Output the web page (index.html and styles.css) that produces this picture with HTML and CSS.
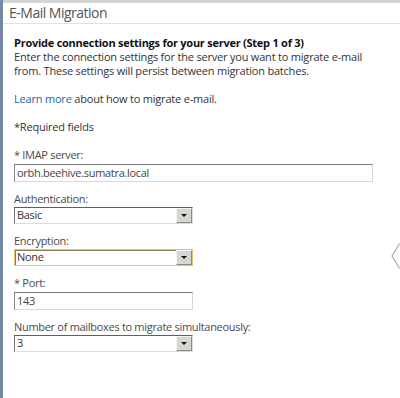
FILE: index.html
```html
<!DOCTYPE html>
<html>

<head>
    <title>E-Mail Migration</title>
    <link rel="stylesheet" href="styles.css">
</head>

<body>
    <div class="page">
        <div class="topbar"></div>
        <h1 class="title">E-Mail Migration</h1>

        <div class="content">
            <h2>Provide connection settings for your server (Step 1 of 3)</h2>
            <p>Enter the connection settings for the server you want to migrate e-mail<br>from. These settings will persist between migration batches.</p>

            <p class="gap"><a href="#">Learn more</a> about how to migrate e-mail.</p>

            <p class="gap">*Required fields</p>

            <div class="field first">
                <label>* IMAP server:</label>
                <div class="textbox wide">orbh.beehive.sumatra.local</div>
            </div>

            <div class="field">
                <label>Authentication:</label>
                <div class="select">
                    <span class="value">Basic</span>
                    <span class="drop"><span class="tri"></span></span>
                </div>
            </div>

            <div class="field">
                <label>Encryption:</label>
                <div class="select focused">
                    <span class="value">None</span>
                    <span class="drop"><span class="tri"></span></span>
                </div>
            </div>

            <div class="field">
                <label>* Port:</label>
                <div class="textbox">143</div>
            </div>

            <div class="field">
                <label>Number of mailboxes to migrate simultaneously:</label>
                <div class="select">
                    <span class="value">3</span>
                    <span class="drop"><span class="tri"></span></span>
                </div>
            </div>
        </div>

        <!-- pager arrow sits over the right edge -->
        <svg class="pager" width="9" height="26" viewBox="0 0 9 26">
            <polyline points="8.5,0.5 1,13 8.5,25.5" fill="none" stroke="#a8a8a8" stroke-width="1.2"/>
        </svg>
    </div>
</body>

</html>
```

FILE: styles.css
```css
body {
    margin: 0;
    font-family: "Open Sans", sans-serif;
    font-size: 11px;
    color: #333;
    background: #fff;
}

.page {
    position: relative;
    height: 398px;
    border-left: 3px solid #7589a6;
    overflow: hidden;
}

.topbar {
    height: 3px;
    background: #d5d5d5;
}

.title {
    margin: 0;
    height: 20px;
    line-height: 20px;
    padding-left: 6px;
    font-size: 14px;
    font-weight: 400;
    letter-spacing: -0.5px;
    color: #555;
    border-bottom: 1px solid #e2e2e2;
}

.content {
    padding: 12px 0 0 11px;
    line-height: 14px;
    letter-spacing: -0.2px;
}

h2 {
    margin: 0;
    font-size: 11px;
    font-weight: bold;
    letter-spacing: -0.25px;
    color: #111;
}

p {
    margin: 0;
}

.gap {
    margin-top: 14px;
}

a {
    color: #1c65a3;
    text-decoration: none;
}

.field {
    margin-top: 10px;
    letter-spacing: -0.3px;
}

.field.first {
    margin-top: 14px;
}

label {
    display: block;
    color: #4a4a4a;
}

.textbox {
    box-sizing: border-box;
    width: 179px;
    height: 18px;
    margin-top: 2px;
    padding-left: 2px;
    line-height: 15px;
    color: #444;
    border: 1px solid #d8d8d8;
    border-top-color: #7b7b7b;
    border-left-color: #8a8a8a;
}

.textbox.wide {
    width: 359px;
}

.select {
    box-sizing: border-box;
    display: flex;
    width: 179px;
    height: 17px;
    margin-top: 1px;
    border: 1px solid #dcdcdc;
    border-top-color: #5f5f5f;
    border-left-color: #707070;
}

.select.focused {
    border: 1px solid #e6c470;
    box-shadow: inset 1px 1px 0 #8a7a50;
}

.select .value {
    flex: 1;
    padding-left: 2px;
    line-height: 14px;
    color: #333;
}

.drop {
    width: 14px;
    display: flex;
    align-items: center;
    justify-content: center;
    background: #d8d6d0;
    border-left: 1px solid #f4f4f4;
    border-top: 1px solid #f4f4f4;
    border-right: 1px solid #8a8a8a;
    border-bottom: 1px solid #8a8a8a;
}

.tri {
    width: 0;
    height: 0;
    border-left: 3px solid transparent;
    border-right: 3px solid transparent;
    border-top: 3px solid #111;
}

.pager {
    position: absolute;
    top: 243px;
    right: 0;
}
```
